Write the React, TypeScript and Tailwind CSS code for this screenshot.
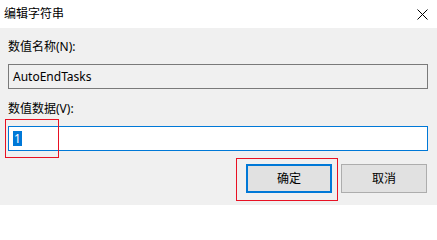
import React from "react";

export default function App() {
  const font = { fontFamily: '"Noto Sans", "Noto Sans CJK SC", sans-serif' };
  return (
    <div
      className="relative w-[437px] h-[205px] overflow-hidden bg-[#f0f0f0] text-[12px] leading-[16px] text-black"
      style={font}
    >
      <div className="h-[28px] bg-white flex items-center justify-between pl-[4px] pr-[9px]">
        <span className="text-[12px]">编辑字符串</span>
        <svg width="11" height="11" viewBox="0 0 11 11" className="block">
          <path d="M0.5 0.5 L10.5 10.5 M10.5 0.5 L0.5 10.5" stroke="#000" strokeWidth="1" fill="none" />
        </svg>
      </div>
      <div className="pl-[8px] pr-[9px] flex flex-col">
        <div className="mt-[11px] h-[16px]">数值名称(N):</div>
        <div className="mt-[9px] h-[25px] border border-[#7a7a7a] bg-[#f0f0f0] flex items-center pl-[4px]">
          AutoEndTasks
        </div>
        <div className="mt-[12px] h-[16px]">数值数据(V):</div>
        <div className="mt-[9px] h-[25px] border border-[#0078d7] bg-white flex items-center pl-[4px]">
          <span className="bg-[#0078d7] text-white leading-[15px] px-[1px]">1</span>
        </div>
        <div className="mt-[13px] flex justify-end gap-[9px] pr-[1px]">
          <button className="w-[86px] h-[29px] border-2 border-[#0078d7] bg-[#e1e1e1] flex items-center justify-center">
            确定
          </button>
          <button className="w-[86px] h-[29px] border border-[#adadad] bg-[#e1e1e1] flex items-center justify-center">
            取消
          </button>
        </div>
      </div>
      <div className="absolute left-[5px] top-[119px] w-[54px] h-[39px] border border-[#e81123]" />
      <div className="absolute left-[236px] top-[158px] w-[102px] h-[43px] border border-[#e81123]" />
    </div>
  );
}
